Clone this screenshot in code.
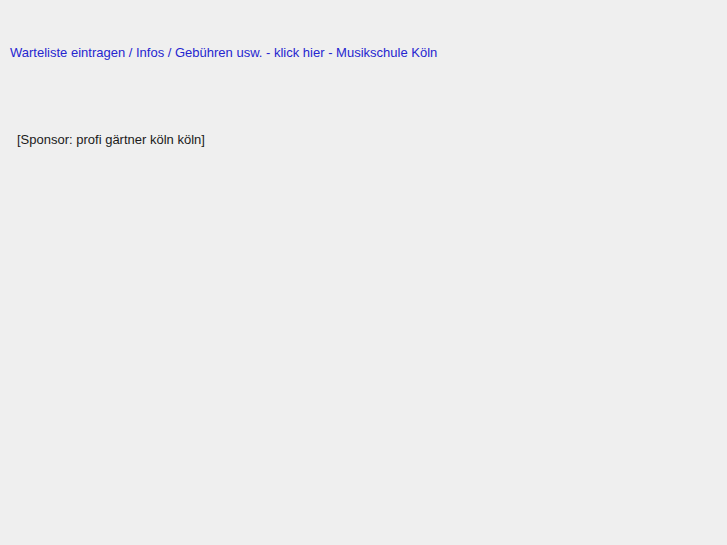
export default function App() {
  return (
    <div className="min-h-[545px] bg-[#efefef] font-['Liberation_Sans',Arial,sans-serif] text-[13px] leading-[15px]">
      <div className="pt-[45px] pl-[10px]">
        <a href="#" className="text-[#2626cf] no-underline">
          Warteliste eintragen / Infos / Gebühren usw. - klick hier - Musikschule Köln
        </a>
      </div>
      <div className="pt-[72px] pl-[17px] text-[#1a1a1a]">[Sponsor: profi gärtner köln köln]</div>
    </div>
  );
}
